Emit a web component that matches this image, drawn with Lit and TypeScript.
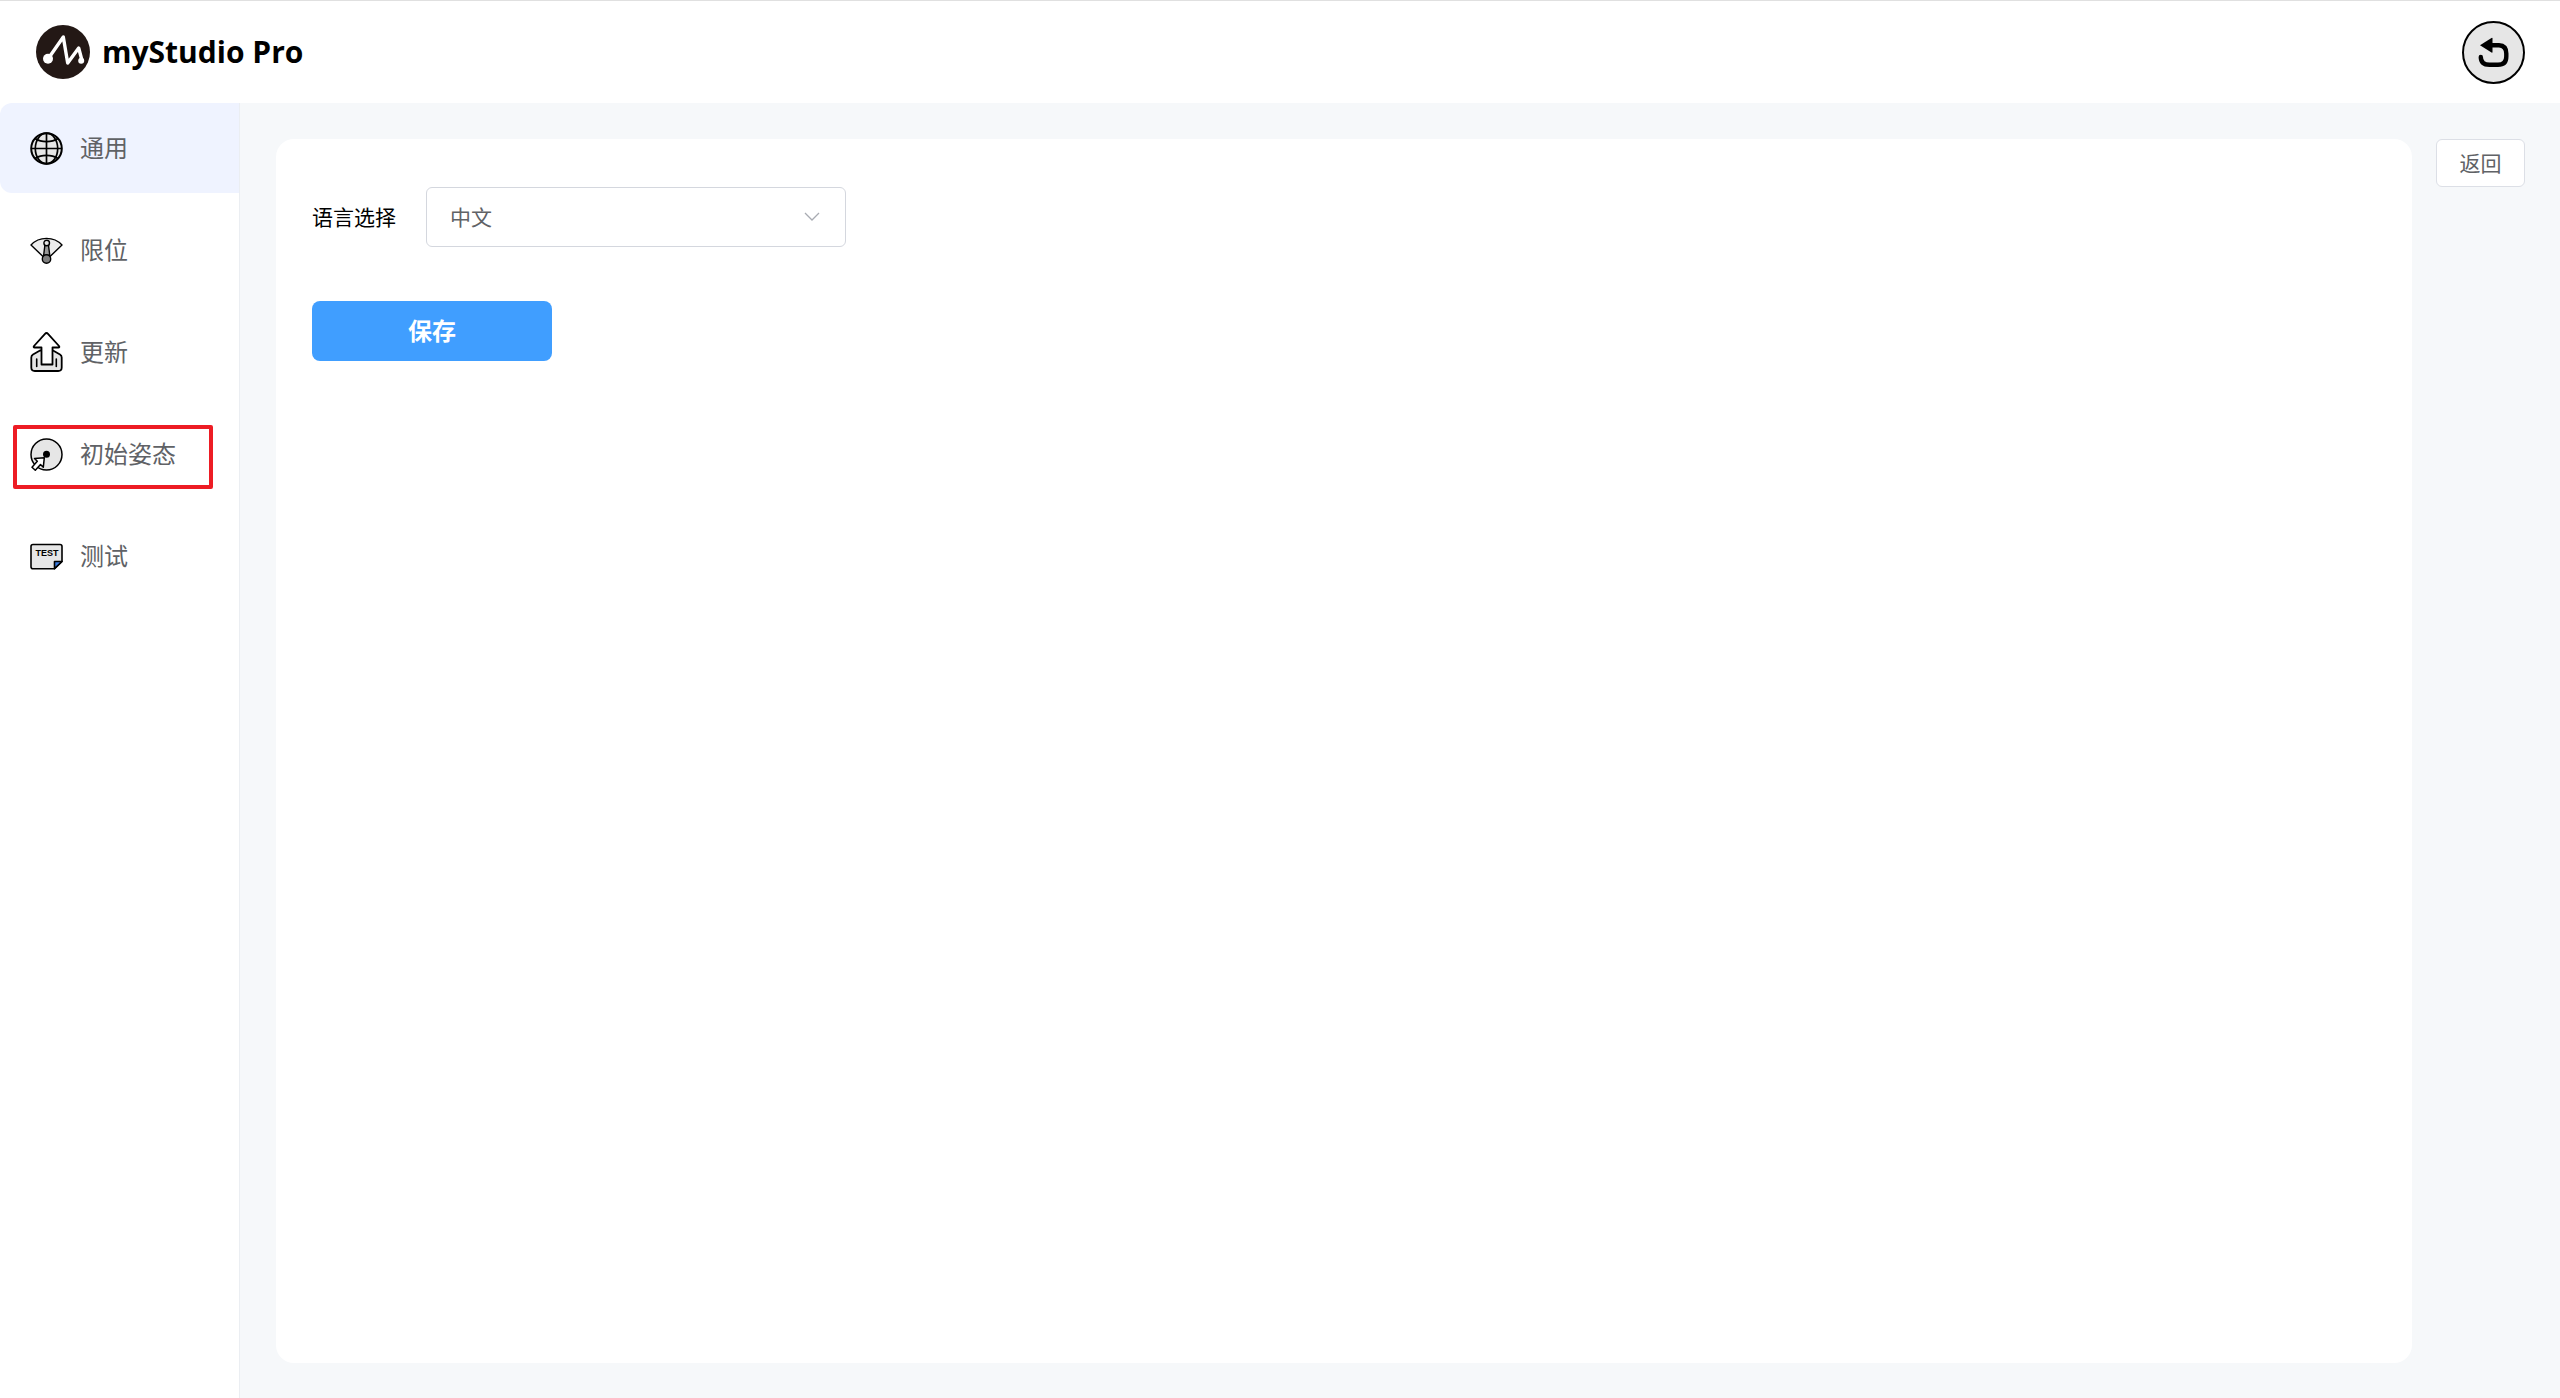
import { LitElement, html, svg, css, nothing } from "lit";
import { customElement, state } from "lit/decorators.js";

const globeIcon = svg`
  <svg class="icon" viewBox="0 0 33 33" width="33" height="33" aria-hidden="true" fill="none" stroke="#000" stroke-width="2">
    <circle cx="16.5" cy="16.5" r="15.3" fill="#e6e6e6" />
    <ellipse cx="16.5" cy="16.5" rx="11.2" ry="15.3" stroke-width="1.7" />
    <path d="M16.5 1v31M1 16.5h31" stroke-width="1.7" />
    <path d="M5 6.5c6.5 4.2 16.5 4.2 23 0M5 26.500c6.5-4.2 16.5-4.2 23 0" stroke-width="1.7" />
  </svg>`;

const limitIcon = svg`
  <svg class="icon" viewBox="0 0 33 27" width="33" height="27" aria-hidden="true" fill="none" stroke="#000" stroke-width="1.4" stroke-linejoin="round">
    <path d="M1 8C9-.9 24-.9 32 8L19.500 20h-6z" fill="#ececec" />
    <path d="M15 7.500h3.400l1.400 11h-6.200z" fill="#999" />
    <circle cx="16.700" cy="6" r="2.800" fill="#e6e6e6" />
    <circle cx="16.500" cy="22" r="4.200" fill="#808080" />
  </svg>`;

const updateIcon = svg`
  <svg class="icon" viewBox="0 0 33 40" width="33" height="40" aria-hidden="true" fill="none" stroke="#000" stroke-width="1.8" stroke-linejoin="round" stroke-linecap="round">
    <path d="M10 18.500 3 22.500Q1.300 23.500 1.300 25.500V35.500Q1.300 39 4.800 39H28.200Q31.700 39 31.700 35.500V25.500Q31.700 23.500 30 22.500L23 18.500z" fill="#e6e6e6" />
    <path d="M6.700 27v7.500M26.300 27v7.500" stroke-width="1.6" />
    <path d="M16.500 1Q17.300 1 18 1.800L29 14Q30 15.500 28.300 15.500H22.500V32.500H11.500V15.500H4.700Q3 15.500 4 14L15 1.800Q15.700 1 16.500 1z" fill="#fff" />
  </svg>`;

const poseIcon = svg`
  <svg class="icon" viewBox="0 0 33 33" width="33" height="33" aria-hidden="true" fill="none" stroke="#000" stroke-width="1.5" stroke-linejoin="round">
    <circle cx="16.500" cy="16.500" r="15.500" fill="#e6e6e6" />
    <circle cx="16.500" cy="16.200" r="3.500" fill="#000" stroke="none" />
    <path d="M14.300 19.800 4.500 20.500 7.300 23.300 2 29.300 5.300 32.300 10.500 26.500 13.300 29.200z" fill="#fff" />
  </svg>`;

const testIcon = svg`
  <svg class="icon" viewBox="0 0 33 27" width="33" height="27" aria-hidden="true" fill="none" stroke="#000" stroke-width="1.6" stroke-linejoin="round">
    <path d="M3 1.500H30Q32 1.500 32 3.500V18.500L24.500 25.700H3Q1 25.700 1 23.700V3.500Q1 1.500 3 1.500z" fill="#e6e6e6" />
    <path d="M24.500 25.700V18.500H32z" fill="#3a7be0" />
    <text class="test" x="17" y="13" text-anchor="middle" fill="#000" stroke="none">TEST</text>
  </svg>`;

const logo = svg`
  <svg viewBox="0 0 54 54" width="54" height="54" aria-hidden="true">
    <circle cx="27" cy="27" r="27" fill="#231815" />
    <path d="M12 34 27.300 12 31.700 38 42.700 23 46 35.500" fill="none" stroke="#fff" stroke-width="3.4" stroke-linejoin="round" />
    <circle cx="12" cy="33.800" r="5" fill="#fff" />
    <circle cx="45.200" cy="35.700" r="3" fill="#fff" />
  </svg>`;

const undoIcon = svg`
  <svg viewBox="0 0 63 63" width="63" height="63" aria-hidden="true">
    <circle cx="31.500" cy="31.500" r="30.500" fill="#e6e6e6" stroke="#000" stroke-width="2" />
    <path d="M29 24.200H37Q44.300 24.500 44.300 32.500V35.500Q44.300 43.800 36 43.800H27.500Q18.800 43.800 18.800 36" fill="none" stroke="#000" stroke-width="4.4" stroke-linecap="round" />
    <path d="M18 24.200 29.500 17Q30.500 16.500 30.500 17.500V31Q30.500 32 29.500 31.500z" fill="#000" />
  </svg>`;

const items = [
  { id: "general", label: "通用", icon: globeIcon },
  { id: "limit", label: "限位", icon: limitIcon },
  { id: "update", label: "更新", icon: updateIcon },
  { id: "pose", label: "初始姿态", icon: poseIcon, marked: true },
  { id: "test", label: "测试", icon: testIcon },
];

@customElement("app-root")
export class AppRoot extends LitElement {
  @state() private active = "general";

  static styles = css`
    :host {
      display: flex;
      flex-direction: column;
      min-height: 100vh;
      box-sizing: border-box;
      border-top: 1px solid #e0e0e0;
      background: #f6f8fa;
      color: #000;
      font-family: "Noto Sans CJK SC", sans-serif;
    }
    * {
      box-sizing: border-box;
    }
    svg {
      display: block;
      flex: none;
    }
    button {
      font: inherit;
      cursor: pointer;
    }
    .header {
      display: flex;
      align-items: center;
      justify-content: space-between;
      height: 102px;
      padding: 0 35px 0 36px;
      background: #fff;
    }
    .brand {
      display: flex;
      align-items: center;
      gap: 12px;
    }
    .title {
      margin: 0;
      font: 700 30px/44px "Open Sans", "Noto Sans", sans-serif;
    }
    .undo {
      padding: 0;
      border: 0;
      border-radius: 50%;
      background: none;
    }
    .body {
      display: flex;
      flex: 1;
    }
    .sidebar {
      display: flex;
      flex-direction: column;
      gap: 12px;
      width: 240px;
      flex: none;
      border-right: 1px solid #ebeef2;
      background: #fff;
    }
    .item {
      position: relative;
      display: flex;
      align-items: center;
      gap: 17px;
      height: 90px;
      padding: 0 30px;
      border: 0;
      border-radius: 12px 0 0 12px;
      background: none;
      color: #606266;
      font-size: 24px;
      line-height: 36px;
      white-space: nowrap;
    }
    .item.active {
      background: #eff3ff;
    }
    .caption {
      padding-bottom: 2px;
    }
    .mark {
      position: absolute;
      left: 13px;
      top: 16px;
      width: 200px;
      height: 64px;
      border: 4px solid #ed1c24;
      border-radius: 2px;
    }
    .test {
      font: 700 9px "Liberation Sans", sans-serif;
    }
    .main {
      display: flex;
      flex: 1;
      align-items: stretch;
      gap: 24px;
      padding: 36px 35px 35px 36px;
    }
    .card {
      display: flex;
      flex: 1;
      flex-direction: column;
      align-items: flex-start;
      gap: 54px;
      padding: 48px 36px;
      border-radius: 18px;
      background: #fff;
    }
    .field {
      display: flex;
      align-items: center;
      gap: 30px;
    }
    .label {
      padding-bottom: 2px;
      font-size: 21px;
      line-height: 32px;
    }
    .picker {
      display: grid;
      align-items: center;
      width: 420px;
    }
    .select {
      grid-area: 1 / 1;
      width: 100%;
      height: 60px;
      padding: 0 60px 2px 23px;
      appearance: none;
      border: 1px solid #d4d7de;
      border-radius: 6px;
      background: #fff;
      color: #606266;
      font: 21px/32px "Noto Sans CJK SC", sans-serif;
    }
    .chevron {
      grid-area: 1 / 1;
      justify-self: end;
      margin-right: 26px;
      pointer-events: none;
    }
    .save {
      width: 240px;
      height: 60px;
      padding: 0 0 2px;
      border: 0;
      border-radius: 8px;
      background: #409eff;
      color: #fff;
      font-size: 24px;
      font-weight: 700;
      line-height: 36px;
    }
    .back {
      align-self: flex-start;
      min-width: 89px;
      height: 48px;
      padding: 0 22px 2px;
      border: 1px solid #dcdfe6;
      border-radius: 6px;
      background: #fff;
      color: #606266;
      font-size: 21px;
      line-height: 32px;
    }
  `;

  render() {
    return html`
      <header class="header">
        <div class="brand">
          ${logo}
          <h1 class="title">myStudio Pro</h1>
        </div>
        <button class="undo" type="button" aria-label="返回">${undoIcon}</button>
      </header>
      <div class="body">
        <nav class="sidebar">
          ${items.map(
            (item) => html`
              <button
                type="button"
                class="item ${this.active === item.id ? "active" : ""}"
                @click=${() => (this.active = item.id)}
              >
                ${item.icon}<span class="caption">${item.label}</span>
                ${item.marked ? html`<span class="mark"></span>` : nothing}
              </button>
            `
          )}
        </nav>
        <main class="main">
          <section class="card">
            <div class="field">
              <label class="label" for="language">语言选择</label>
              <div class="picker">
                <select class="select" id="language">
                  <option>中文</option>
                </select>
                <svg class="chevron" viewBox="0 0 16 10" width="16" height="10" aria-hidden="true">
                  <path d="M1 1l7 7 7-7" fill="none" stroke="#a8abb2" stroke-width="1.3" />
                </svg>
              </div>
            </div>
            <button class="save" type="button">保存</button>
          </section>
          <button class="back" type="button">返回</button>
        </main>
      </div>
    `;
  }
}
